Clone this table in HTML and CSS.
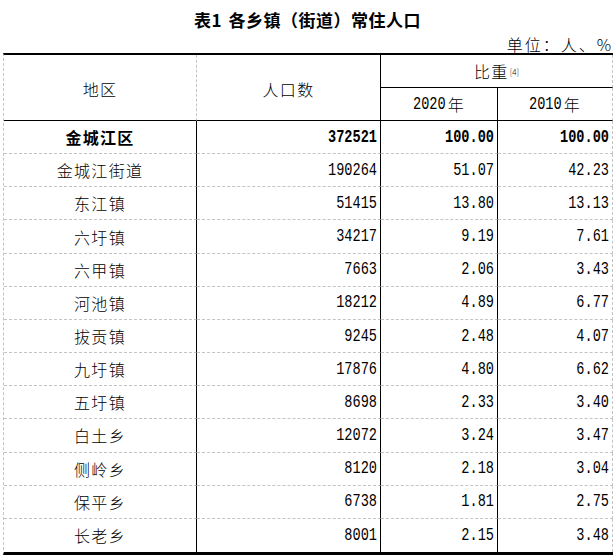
FILE: index.html
```html
<!DOCTYPE html>
<html lang="zh-CN">
<head>
<meta charset="utf-8">
<title>表1 各乡镇（街道）常住人口</title>
<link rel="stylesheet" href="styles.css">
</head>
<body>
<div class="page">
  <div class="title">表1 各乡镇（街道）常住人口</div>
  <div class="unit">单位：人、%</div>
  <div class="tbl">
    <div class="c h span2 name-h">地区</div>
    <div class="c h span2 name-h">人口数</div>
    <div class="c h wide mid">比重<sup class="sup">[4]</sup></div>
    <div class="c h bot"><span class="num">2020</span>年</div>
    <div class="c h bot"><span class="num">2010</span>年</div>

    <div class="c n b">金城江区</div><div class="c v b"><span class="num">372521</span></div><div class="c v b"><span class="num">100.00</span></div><div class="c v b"><span class="num">100.00</span></div>
    <div class="c n">金城江街道</div><div class="c v"><span class="num">190264</span></div><div class="c v"><span class="num">51.07</span></div><div class="c v"><span class="num">42.23</span></div>
    <div class="c n">东江镇</div><div class="c v"><span class="num">51415</span></div><div class="c v"><span class="num">13.80</span></div><div class="c v"><span class="num">13.13</span></div>
    <div class="c n">六圩镇</div><div class="c v"><span class="num">34217</span></div><div class="c v"><span class="num">9.19</span></div><div class="c v"><span class="num">7.61</span></div>
    <div class="c n">六甲镇</div><div class="c v"><span class="num">7663</span></div><div class="c v"><span class="num">2.06</span></div><div class="c v"><span class="num">3.43</span></div>
    <div class="c n">河池镇</div><div class="c v"><span class="num">18212</span></div><div class="c v"><span class="num">4.89</span></div><div class="c v"><span class="num">6.77</span></div>
    <div class="c n">拔贡镇</div><div class="c v"><span class="num">9245</span></div><div class="c v"><span class="num">2.48</span></div><div class="c v"><span class="num">4.07</span></div>
    <div class="c n">九圩镇</div><div class="c v"><span class="num">17876</span></div><div class="c v"><span class="num">4.80</span></div><div class="c v"><span class="num">6.62</span></div>
    <div class="c n">五圩镇</div><div class="c v"><span class="num">8698</span></div><div class="c v"><span class="num">2.33</span></div><div class="c v"><span class="num">3.40</span></div>
    <div class="c n">白土乡</div><div class="c v"><span class="num">12072</span></div><div class="c v"><span class="num">3.24</span></div><div class="c v"><span class="num">3.47</span></div>
    <div class="c n">侧岭乡</div><div class="c v"><span class="num">8120</span></div><div class="c v"><span class="num">2.18</span></div><div class="c v"><span class="num">3.04</span></div>
    <div class="c n">保平乡</div><div class="c v"><span class="num">6738</span></div><div class="c v"><span class="num">1.81</span></div><div class="c v"><span class="num">2.75</span></div>
    <div class="c n last">长老乡</div><div class="c v last"><span class="num">8001</span></div><div class="c v last"><span class="num">2.15</span></div><div class="c v last"><span class="num">3.48</span></div>
  </div>
</div>
</body>
</html>
```
FILE: styles.css
```css
html, body {
  margin: 0;
  padding: 0;
  background: #fff;
}
.page {
  width: 615px;
  color: #000;
  font-family: "Noto Sans CJK SC", "Noto Sans", sans-serif;
}
.title {
  padding-top: 8px;
  height: 24px;
  line-height: 24px;
  text-align: center;
  font-size: 17px;
  font-weight: bold;
  letter-spacing: 0.5px;
  word-spacing: 2px;
}
.unit {
  box-sizing: border-box;
  height: 21px;
  padding-top: 4px;
  line-height: 17px;
  text-align: right;
  padding-right: 2px;
  font-size: 16px;
  font-weight: 300;
  letter-spacing: 2px;
}
.tbl {
  margin-left: 3px;
  width: 609px;
  display: grid;
  grid-template-columns: 193px 184px 117px 115px;
  grid-template-rows: 33px 33px repeat(13, 33.16px);
  border-top: 2px solid #000;
  border-bottom: 3px solid #000;
  border-left: 1px dashed #c4c4c4;
}
.c {
  box-sizing: border-box;
  border-right: 1px solid #000;
  border-bottom: 1px dashed #c4c4c4;
  display: flex;
  align-items: center;
  font-size: 16px;
  font-weight: 300;
  letter-spacing: 1.3px;
}
.c:nth-child(4n + 1) {
  border-right: 1px dashed #c4c4c4;
}
.h {
  justify-content: center;
  border-bottom: 1px solid #000;
}
.h:nth-child(2) { border-right: 1px solid #000; }
.span2 { grid-row: span 2; }
.name-h { padding-top: 2px; }
.wide { grid-column: span 2; border-right: 1px dashed #c4c4c4; }
.h.bot:nth-child(5) { border-right: 1px dashed #c4c4c4; }
.h.bot:nth-child(4) { border-right: 1px solid #000; }
.sup {
  font-size: 8px;
  letter-spacing: 0;
  vertical-align: 7px;
  margin-left: 1px;
}
.n {
  justify-content: center;
}
.v {
  justify-content: flex-end;
  padding-right: 3px;
}
.c.v:nth-child(4n + 1) { border-right: 1px dashed #c4c4c4; }
.c.n:nth-child(4n + 2) { border-right: 1px solid #000; }
.b { font-weight: bold; }
.last { border-bottom: none; }
.num {
  display: inline-block;
  font-family: "Liberation Mono", "DejaVu Sans Mono", monospace;
  font-size: 13.6px;
  letter-spacing: 0;
  transform: scaleY(1.4);
  transform-origin: center;
}
.h .num { margin-right: 2px; }
```
